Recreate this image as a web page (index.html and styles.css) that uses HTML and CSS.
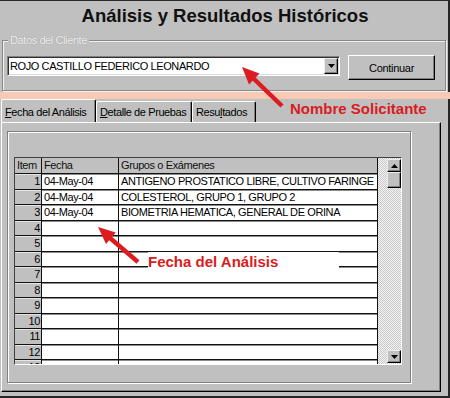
FILE: index.html
```html
<!DOCTYPE html>
<html lang="es">

<head>
    <meta charset="UTF-8">
    <meta name="viewport" content="width=device-width, initial-scale=1.0">
    <title>Análisis y Resultados Históricos</title>
    <link rel="stylesheet" href="styles.css">
</head>

<body>
    <div class="window">
        <h1 class="title">Análisis y Resultados Históricos</h1>

        <div class="group">
            <span class="group-label">Datos del Cliente</span>
            <div class="client-row">
                <div class="combo">
                    <span class="combo-text">ROJO CASTILLO FEDERICO LEONARDO</span>
                    <div class="combo-btn">
                        <svg width="7" height="4" viewBox="0 0 7 4"><polygon points="0,0 7,0 3.5,4" fill="#000" /></svg>
                    </div>
                </div>
                <div class="btn">Continuar</div>
            </div>
        </div>

        <div class="band"></div>

        <div class="tabs">
            <div class="tab tab-date active"><u>F</u>echa del Análisis</div>
            <div class="tab tab-detail"><u>D</u>etalle de Pruebas</div>
            <div class="tab tab-result">Resu<u>l</u>tados</div>
        </div>

        <div class="panel">
            <div class="frame">
                <div class="grid">
                    <div class="grid-body">
                        <div class="row head">
                            <div class="cell item">Item</div>
                            <div class="cell date">Fecha</div>
                            <div class="cell groups">Grupos o Exámenes</div>
                        </div>
                        <div class="row">
                            <div class="cell item">1</div>
                            <div class="cell date">04-May-04</div>
                            <div class="cell groups">ANTIGENO PROSTATICO LIBRE, CULTIVO FARINGE</div>
                        </div>
                        <div class="row">
                            <div class="cell item">2</div>
                            <div class="cell date">04-May-04</div>
                            <div class="cell groups">COLESTEROL, GRUPO 1, GRUPO 2</div>
                        </div>
                        <div class="row">
                            <div class="cell item">3</div>
                            <div class="cell date">04-May-04</div>
                            <div class="cell groups">BIOMETRIA HEMATICA, GENERAL DE ORINA</div>
                        </div>
                        <div class="row"><div class="cell item">4</div><div class="cell date"></div><div class="cell groups"></div></div>
                        <div class="row"><div class="cell item">5</div><div class="cell date"></div><div class="cell groups"></div></div>
                        <div class="row"><div class="cell item">6</div><div class="cell date"></div><div class="cell groups"></div></div>
                        <div class="row"><div class="cell item">7</div><div class="cell date"></div><div class="cell groups"></div></div>
                        <div class="row"><div class="cell item">8</div><div class="cell date"></div><div class="cell groups"></div></div>
                        <div class="row"><div class="cell item">9</div><div class="cell date"></div><div class="cell groups"></div></div>
                        <div class="row"><div class="cell item">10</div><div class="cell date"></div><div class="cell groups"></div></div>
                        <div class="row"><div class="cell item">11</div><div class="cell date"></div><div class="cell groups"></div></div>
                        <div class="row"><div class="cell item">12</div><div class="cell date"></div><div class="cell groups"></div></div>
                        <div class="row"><div class="cell item">13</div><div class="cell date"></div><div class="cell groups"></div></div>
                    </div>
                    <div class="vscroll">
                        <div class="sb-btn">
                            <svg width="7" height="4" viewBox="0 0 7 4"><polygon points="0,4 3.5,0 7,4" fill="#000" /></svg>
                        </div>
                        <div class="sb-thumb"></div>
                        <div class="sb-space"></div>
                        <div class="sb-btn">
                            <svg width="7" height="4" viewBox="0 0 7 4"><polygon points="0,0 7,0 3.5,4" fill="#000" /></svg>
                        </div>
                    </div>
                </div>
            </div>
        </div>

        <!-- red annotations drawn over the screenshot -->
        <svg class="arrows" width="450" height="398" viewBox="0 0 450 398">
            <line x1="282" y1="106" x2="253" y2="78" stroke="#dc1c21" stroke-width="4.5" />
            <polygon points="242,67 259.5,73.5 249,84.5" fill="#dc1c21" />
            <line x1="138" y1="262" x2="110" y2="238" stroke="#dc1c21" stroke-width="4.5" />
            <polygon points="98,227 115.8,232.6 106,244" fill="#dc1c21" />
        </svg>
        <div class="note note-name">Nombre Solicitante</div>
        <div class="note note-date">Fecha del Análisis</div>
    </div>
</body>

</html>
```

FILE: styles.css
```css
* {
    box-sizing: border-box;
    margin: 0;
    padding: 0;
    font-family: "Liberation Sans", Arial, sans-serif;
    color: #000;
}

body {
    width: 450px;
    height: 398px;
    overflow: hidden;
    background: #c0c0c0;
}

.window {
    position: relative;
    width: 450px;
    height: 398px;
    overflow: hidden;
    background: #c0c0c0;
    box-shadow: inset 0 1px #2a2a2a, inset -2px -2px #262626;
}

.title {
    height: 32px;
    line-height: 32px;
    text-align: center;
    font-size: 18.5px;
    font-weight: bold;
    color: #111;
}

/* Datos del Cliente */
.group {
    position: relative;
    margin: 8px 4px 0 2px;
    height: 51px;
    padding: 15px 0 0 4px;
    border: 1px solid #888;
    box-shadow: inset 1px 1px #f2f2f2, 1px 1px #f2f2f2;
}

.group-label {
    position: absolute;
    top: -7px;
    left: 5px;
    padding: 0 2px;
    background: #c0c0c0;
    font-size: 11px;
    line-height: 12px;
    letter-spacing: -0.4px;
    color: #f0f0f0;
    text-shadow: 0 0 1px #8c8c8c;
}

.client-row {
    display: flex;
    align-items: flex-start;
    gap: 8px;
}

.combo {
    width: 333px;
    height: 20px;
    padding: 0 1px 0 2px;
    background: #fff;
    border: 1px solid;
    border-color: #808080 #fff #fff #808080;
    box-shadow: inset 1px 1px #303030, inset -1px -1px #dcdcdc;

    display: flex;
    align-items: center;
}

.combo-text {
    flex: 1;
    font-size: 11px;
    letter-spacing: -0.4px;
}

.combo-btn {
    width: 14px;
    height: 16px;
    background: #c0c0c0;
    border: 1px solid;
    border-color: #ececec #000 #000 #ececec;
    box-shadow: inset -1px -1px #808080;

    display: flex;
    align-items: center;
    justify-content: center;
}

.btn {
    margin-top: -1px;
    width: 87px;
    height: 25px;
    font-size: 11px;
    letter-spacing: -0.3px;
    border: 1px solid;
    border-color: #fff #000 #000 #fff;
    box-shadow: inset -1px -1px #808080;

    display: flex;
    align-items: center;
    justify-content: center;
}

.band {
    margin-top: 1px;
    height: 7px;
    background: #f7cab6;
}

/* tabs */
.tabs {
    height: 23px;
    padding-left: 1px;

    display: flex;
    align-items: flex-end;
}

.tab {
    height: 21px;
    padding: 1px 0 0 3px;
    font-size: 11px;
    line-height: 18px;
    letter-spacing: -0.4px;
    white-space: nowrap;
    border-top: 1px solid #fff;
    border-left: 1px solid #fff;
    border-right: 1px solid #000;
    border-radius: 2px 2px 0 0;
    box-shadow: inset -1px 0 #808080;
}

.tab u {
    text-underline-offset: 1px;
}

.tab.active {
    height: 23px;
    padding-top: 3px;
}

.tab-date {
    width: 95px;
}

.tab-detail {
    width: 96px;
}

.tab-result {
    width: 64px;
}

.panel {
    margin-left: 1px;
    width: 440px;
    height: 270px;
    padding: 8px 0 0 5px;
    border-top: 1px solid #fff;
    border-left: 1px solid #fff;
    border-right: 1px solid #000;
    border-bottom: 1px solid #000;
    box-shadow: inset -1px -1px #808080;
}

.frame {
    width: 404px;
    height: 252px;
    padding: 25px 0 0 6px;
    border: 1px solid #808080;
    box-shadow: inset 1px 1px #fff, 1px 1px #fff;
}

/* flex grid */
.grid {
    width: 388px;
    height: 208px;
    border: 1px solid;
    border-color: #404040 #fff #fff #404040;

    display: flex;
}

.grid-body {
    width: 363px;
    overflow: hidden;
    background: #fff;
}

.row {
    height: 15.5px;
    border-bottom: 1px solid #111;

    display: flex;
}

.row.head {
    height: 16px;
}

.cell {
    padding: 0 2px;
    font-size: 11px;
    line-height: 14px;
    letter-spacing: -0.4px;
    white-space: nowrap;
    overflow: hidden;
    border-right: 1px solid #111;
    box-shadow: inset 0 1px #8c8c8c;
}

.item {
    width: 27px;
    background: #c0c0c0;
    text-align: right;
    padding-right: 1px;
    box-shadow: inset 0 1px #e4e4e4;
}

.date {
    width: 77px;
}

.groups {
    width: 259px;
}

.head .cell {
    background: #c0c0c0;
    text-align: left;
    color: #111;
    box-shadow: none;
}

.vscroll {
    flex: 1;
    padding: 1px 0;
    background: repeating-conic-gradient(#f4f4f4 0 25%, #c8c8c8 0 50%) 0 0 / 2px 2px;

    display: flex;
    flex-direction: column;
    align-items: flex-end;
}

.sb-btn {
    width: 14px;
    height: 13px;
    background: #c0c0c0;
    border: 1px solid;
    border-color: #ececec #000 #000 #ececec;
    box-shadow: inset -1px -1px #808080;

    display: flex;
    align-items: center;
    justify-content: center;
}

.sb-thumb {
    width: 14px;
    height: 16px;
    background: #c0c0c0;
    border: 1px solid;
    border-color: #ececec #000 #000 #ececec;
    box-shadow: inset -1px -1px #808080;
}

.sb-space {
    flex: 1;
}

/* annotations */
.arrows {
    position: absolute;
    left: 0;
    top: 0;
    pointer-events: none;
}

.note {
    position: absolute;
    font-size: 15px;
    font-weight: bold;
    white-space: nowrap;
    color: #d91c20;
}

.note-name {
    left: 290px;
    top: 101px;
    line-height: 15px;
}

.note-date {
    left: 148px;
    top: 252px;
    line-height: 19px;
    padding-right: 61px;
    background: #fff;
}
```
